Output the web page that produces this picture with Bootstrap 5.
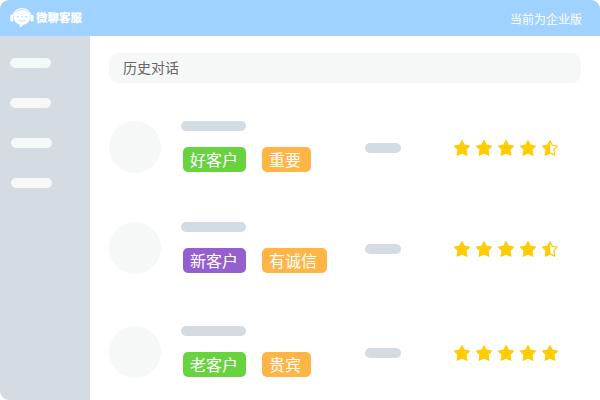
<!DOCTYPE html>
<html lang="zh-CN">
<head>
<meta charset="utf-8">
<meta name="viewport" content="width=device-width, initial-scale=1">
<title>微聊客服</title>
<link href="https://cdn.jsdelivr.net/npm/bootstrap@5.3.0/dist/css/bootstrap.min.css" rel="stylesheet">
<style>
body{font-family:"Noto Sans CJK SC",sans-serif;font-weight:400;background:#fff}
.app{width:600px;height:400px;border-radius:9px}
.topbar{height:36px;background:#a0d2ff;padding:0 18px 0 10px}
.brand-name{font-size:11.5px;font-weight:900;line-height:16px;margin:-2px 0 0 2px}
.edition{font-size:12px;line-height:18px;padding-top:1px}
.side{width:90px;background:#d4dbe1;padding:22px 0 0 10px;gap:30px}
.side-item{width:41px;height:10px;background:#f5f8f7}
.shift{margin-left:1px}
.main{padding:17px 19px 0}
.heading{height:30px;border-radius:9px;background:#f5f8f7;color:#666;font-size:14px;line-height:29px;padding-left:14px;margin-bottom:38px}
.entry{height:52px;margin-bottom:49px}
.entry + .entry{margin-bottom:52px}
.avatar{width:52px;height:52px;background:#f5f8f7}
.info{width:184px;margin-left:20px}
.bar{height:10px;background:#d4dbe1}
.bar-name{width:65px}
.bar-time{width:36px;margin-top:22px}
.tags{gap:16px;margin:16px 0 0 2px}
.tag{height:25px;border-radius:5px;padding:0 8px 0 7px;font-size:16px;line-height:25px;white-space:nowrap}
.tag-3{width:63px}.tag-2{width:49px}.tag-w{width:65px}
.green{background:#69d33f}.orange{background:#ffb545}.purple{background:#955fd0}
.stars{gap:6px;margin:19px 0 0 53px;color:#fc0}
.stars svg{width:16px;height:16px;display:block}
</style>
<script src="https://cdn.jsdelivr.net/npm/bootstrap@5.3.0/dist/js/bootstrap.bundle.min.js"></script>
</head>
<body class="overflow-hidden">
<svg width="0" height="0" class="position-absolute" aria-hidden="true">
  <symbol id="star" viewBox="0 0 16 16"><path fill="currentColor" stroke="currentColor" stroke-width="1.2" stroke-linejoin="round" d="M8 .7 10.3 5.2 15.4 6 11.9 9.7 12.8 15.2 8 12.9 3.200 15.2 4.100 9.7.6 6 5.700 5.200Z"/></symbol>
  <symbol id="half" viewBox="0 0 16 16"><path fill="none" stroke="currentColor" stroke-width="1.2" stroke-linejoin="round" d="M8 .8 10.3 5.2 15.3 6 11.9 9.7 12.7 15.100 8 12.9 3.300 15.100 4.100 9.7.7 6 5.700 5.200Z"/><path fill="currentColor" d="M8.300.5V13L3.200 15.2 4.100 9.7.6 6 5.700 5.200Z"/></symbol>
</svg>
<div class="app d-flex flex-column overflow-hidden">
  <header class="topbar d-flex align-items-center justify-content-between text-white">
    <div class="d-flex align-items-center">
      <svg width="24" height="20" viewBox="0 0 24 20" aria-hidden="true">
        <path d="M3.500 8C4.200-1.800 19.800-1.800 20.500 8" fill="none" stroke="#fff" stroke-width="1.300"/>
        <rect x=".3" y="6.500" width="3.200" height="7" rx="1.500" fill="#fff"/>
        <rect x="20.500" y="6.500" width="3.200" height="7" rx="1.500" fill="#fff"/>
        <path d="M12 2C7.200 2 4 5.200 4 9.600c0 3.600 2.100 6.100 5.300 6.900l1 3 3.200-2.800c4-.4 6.500-3.300 6.500-7.100C20 5.200 16.800 2 12 2Z" fill="#fff"/>
        <g fill="#a0d2ff"><circle cx="7.800" cy="8.600" r=".8"/><circle cx="12" cy="8.600" r=".6"/><circle cx="16.200" cy="8.600" r=".8"/></g>
        <path d="M8.500 12.200q3.500 2 7 0" fill="none" stroke="#a0d2ff" stroke-width=".7"/>
      </svg>
      <span class="brand-name">微聊客服</span>
    </div>
    <span class="edition">当前为企业版</span>
  </header>
  <div class="d-flex flex-grow-1">
    <nav class="side d-flex flex-column flex-shrink-0">
      <div class="side-item rounded-pill"></div>
      <div class="side-item rounded-pill"></div>
      <div class="side-item rounded-pill shift"></div>
      <div class="side-item rounded-pill shift"></div>
    </nav>
    <main class="main flex-grow-1">
      <div class="heading">历史对话</div>
      <div class="entry d-flex">
        <div class="avatar rounded-circle"></div>
        <div class="info">
          <div class="bar bar-name rounded-pill"></div>
          <div class="tags d-flex text-white"><span class="tag tag-3 green">好客户</span><span class="tag tag-2 orange">重要</span></div>
        </div>
        <div class="bar bar-time rounded-pill"></div>
        <div class="stars d-flex"><svg><use href="#star"/></svg><svg><use href="#star"/></svg><svg><use href="#star"/></svg><svg><use href="#star"/></svg><svg><use href="#half"/></svg></div>
      </div>
      <div class="entry d-flex">
        <div class="avatar rounded-circle"></div>
        <div class="info">
          <div class="bar bar-name rounded-pill"></div>
          <div class="tags d-flex text-white"><span class="tag tag-3 purple">新客户</span><span class="tag tag-w orange">有诚信</span></div>
        </div>
        <div class="bar bar-time rounded-pill"></div>
        <div class="stars d-flex"><svg><use href="#star"/></svg><svg><use href="#star"/></svg><svg><use href="#star"/></svg><svg><use href="#star"/></svg><svg><use href="#half"/></svg></div>
      </div>
      <div class="entry d-flex mb-0">
        <div class="avatar rounded-circle"></div>
        <div class="info">
          <div class="bar bar-name rounded-pill"></div>
          <div class="tags d-flex text-white"><span class="tag tag-3 green">老客户</span><span class="tag tag-2 orange">贵宾</span></div>
        </div>
        <div class="bar bar-time rounded-pill"></div>
        <div class="stars d-flex"><svg><use href="#star"/></svg><svg><use href="#star"/></svg><svg><use href="#star"/></svg><svg><use href="#star"/></svg><svg><use href="#star"/></svg></div>
      </div>
    </main>
  </div>
</div>
</body>
</html>
